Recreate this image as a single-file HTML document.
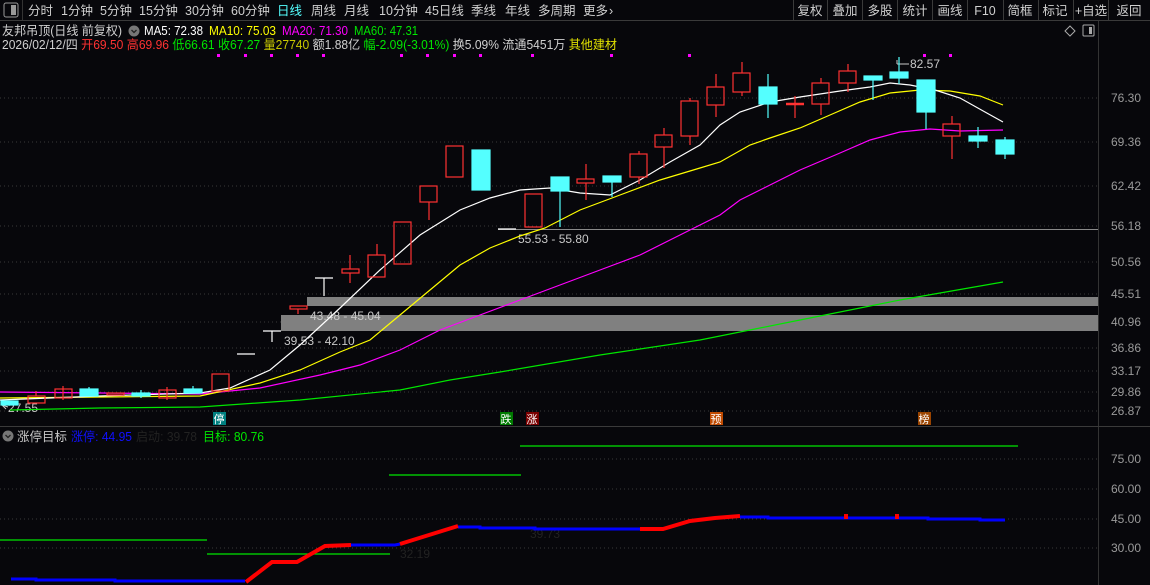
<!DOCTYPE html>
<html><head><meta charset="utf-8"><style>
html,body{margin:0;padding:0;background:#07070b;width:1150px;height:585px;overflow:hidden}
svg{display:block}
text{font-family:"Liberation Sans","Noto Sans CJK SC",sans-serif}
</style></head><body>
<svg width="1150" height="585" viewBox="0 0 1150 585" xmlns="http://www.w3.org/2000/svg">
<rect width="1150" height="585" fill="#07070b"/>
<line x1="0" y1="20.5" x2="1150" y2="20.5" stroke="#3a3a3a"/>
<rect x="4" y="3" width="14" height="14" fill="none" stroke="#999" rx="2"/>
<rect x="11" y="5" width="5" height="10" fill="#999"/>
<line x1="22.5" y1="0" x2="22.5" y2="20" stroke="#333"/>
<g font-size="12.5" fill="#d0d0d0">
<text x="28" y="15">分时</text><text x="61" y="15">1分钟</text><text x="100" y="15">5分钟</text><text x="139" y="15">15分钟</text><text x="185" y="15">30分钟</text><text x="231" y="15">60分钟</text><text x="277" y="15" fill="#54ffff">日线</text><text x="311" y="15">周线</text><text x="344" y="15">月线</text><text x="379" y="15">10分钟</text><text x="425" y="15">45日线</text><text x="471" y="15">季线</text><text x="505" y="15">年线</text><text x="538" y="15">多周期</text><text x="583" y="15">更多</text><text x="609" y="15">›</text>
</g>
<g stroke="#3a3a3a"><line x1="793.5" y1="0" x2="793.5" y2="20"/><line x1="827.5" y1="0" x2="827.5" y2="20"/><line x1="862.5" y1="0" x2="862.5" y2="20"/><line x1="897.5" y1="0" x2="897.5" y2="20"/><line x1="932.5" y1="0" x2="932.5" y2="20"/><line x1="967.5" y1="0" x2="967.5" y2="20"/><line x1="1003.5" y1="0" x2="1003.5" y2="20"/><line x1="1038.5" y1="0" x2="1038.5" y2="20"/><line x1="1073.5" y1="0" x2="1073.5" y2="20"/><line x1="1108.5" y1="0" x2="1108.5" y2="20"/></g>
<g font-size="12.5" fill="#d0d0d0" text-anchor="middle">
<text x="810" y="15">复权</text><text x="845" y="15">叠加</text><text x="880" y="15">多股</text><text x="915" y="15">统计</text><text x="950" y="15">画线</text><text x="985" y="15">F10</text><text x="1020" y="15">简框</text><text x="1055" y="15">标记</text><text x="1091" y="15">+自选</text><text x="1129" y="15">返回</text>
</g>
<line x1="1098.5" y1="21" x2="1098.5" y2="585" stroke="#333"/>
<path d="M1070 26 L1075 31 L1070 36 L1065 31Z" fill="none" stroke="#aaa"/>
<rect x="1083" y="25" width="11" height="11" fill="none" stroke="#aaa" rx="1"/><rect x="1089" y="27" width="3" height="7" fill="#aaa"/>
<text x="2" y="35" font-size="12.5" fill="#d0d0d0" textLength="120" lengthAdjust="spacingAndGlyphs">友邦吊顶(日线 前复权)</text>
<circle cx="134" cy="31" r="5.5" fill="#777"/><path d="M131.5 30 L134 32.5 L136.5 30" stroke="#222" fill="none" stroke-width="1.3"/>
<text x="144" y="35" font-size="12.5" fill="#ffffff" textLength="59" lengthAdjust="spacingAndGlyphs">MA5: 72.38</text>
<text x="209" y="35" font-size="12.5" fill="#ffff00" textLength="67" lengthAdjust="spacingAndGlyphs">MA10: 75.03</text>
<text x="282" y="35" font-size="12.5" fill="#ff00ff" textLength="66" lengthAdjust="spacingAndGlyphs">MA20: 71.30</text>
<text x="354" y="35" font-size="12.5" fill="#00e600" textLength="64" lengthAdjust="spacingAndGlyphs">MA60: 47.31</text>
<text x="2" y="49" font-size="12.5" fill="#d0d0d0" textLength="615" lengthAdjust="spacingAndGlyphs">2026/02/12/四 <tspan fill="#ff3232">开69.50</tspan> <tspan fill="#ff3232">高69.96</tspan> <tspan fill="#00e600">低66.61</tspan> <tspan fill="#00e600">收67.27</tspan> <tspan fill="#c8c800">量27740</tspan> 额1.88亿 <tspan fill="#00e600">幅-2.09(-3.01%)</tspan> 换5.09% 流通5451万 <tspan fill="#e0e000">其他建材</tspan></text>
<g fill="#ff00ff">
<rect x="217" y="54" width="3" height="3"/><rect x="244" y="54" width="3" height="3"/><rect x="270" y="54" width="3" height="3"/><rect x="296" y="54" width="3" height="3"/><rect x="322" y="54" width="3" height="3"/><rect x="400" y="54" width="3" height="3"/><rect x="426" y="54" width="3" height="3"/><rect x="453" y="54" width="3" height="3"/><rect x="479" y="54" width="3" height="3"/><rect x="531" y="54" width="3" height="3"/><rect x="610" y="54" width="3" height="3"/><rect x="688" y="54" width="3" height="3"/><rect x="923" y="54" width="3" height="3"/><rect x="949" y="54" width="3" height="3"/>
</g>
<g stroke="#3a3a3a" stroke-dasharray="1,3">
<line x1="0" y1="98" x2="1098" y2="98"/><line x1="0" y1="142" x2="1098" y2="142"/><line x1="0" y1="186" x2="1098" y2="186"/><line x1="0" y1="226" x2="1098" y2="226"/><line x1="0" y1="262" x2="1098" y2="262"/><line x1="0" y1="294" x2="1098" y2="294"/><line x1="0" y1="322" x2="1098" y2="322"/><line x1="0" y1="348" x2="1098" y2="348"/><line x1="0" y1="371" x2="1098" y2="371"/><line x1="0" y1="392" x2="1098" y2="392"/><line x1="0" y1="411" x2="1098" y2="411"/>
<line x1="0" y1="459" x2="1098" y2="459"/><line x1="0" y1="489" x2="1098" y2="489"/><line x1="0" y1="519" x2="1098" y2="519"/><line x1="0" y1="548" x2="1098" y2="548"/>
</g>
<g font-size="12" fill="#9a9a9a">
<text x="1111" y="102">76.30</text><text x="1111" y="146">69.36</text><text x="1111" y="190">62.42</text><text x="1111" y="230">56.18</text><text x="1111" y="266">50.56</text><text x="1111" y="298">45.51</text><text x="1111" y="326">40.96</text><text x="1111" y="352">36.86</text><text x="1111" y="375">33.17</text><text x="1111" y="396">29.86</text><text x="1111" y="415">26.87</text>
<text x="1111" y="463">75.00</text><text x="1111" y="493">60.00</text><text x="1111" y="523">45.00</text><text x="1111" y="552">30.00</text>
</g>
<rect x="307" y="297" width="791" height="9" fill="#808080"/>
<rect x="281" y="315" width="817" height="16" fill="#808080"/>
<line x1="498" y1="229.5" x2="1098" y2="229.5" stroke="#8a8a8a"/>
<g font-size="12" fill="#c8c8c8">
<text x="310" y="320">43.48 - 45.04</text><text x="284" y="345">39.53 - 42.10</text><text x="518" y="243">55.53 - 55.80</text><text x="910" y="68">82.57</text><text x="8" y="412">27.55</text>
</g>
<path d="M897 64 L909 64 M897 60 L897 64" stroke="#c8c8c8" fill="none"/>
<path d="M2 405 L6 409 M2 405 L8 407" stroke="#c8c8c8" fill="none"/>
<polyline fill="none" stroke="#00e600" stroke-width="1.2" points="10,410 100,408 200,407 300,400 400,390 450,380 500,372 600,355 700,340 800,320 900,300 1003,282"/>
<polyline fill="none" stroke="#ff00ff" stroke-width="1.2" points="0,392 200,394 260,388 320,375 360,365 400,350 440,330 480,315 520,300 560,285 600,270 640,255 680,235 720,215 740,200 770,185 800,170 840,153 870,140 900,132 930,129 960,131 1003,130"/>
<polyline fill="none" stroke="#ffff00" stroke-width="1.2" points="0,398 200,396 260,383 300,370 340,352 370,340 400,315 430,290 460,265 490,248 520,236 545,228 580,210 620,195 660,180 700,168 720,162 750,145 770,138 800,128 830,115 860,102 890,93 920,90 950,91 980,96 1003,105"/>
<polyline fill="none" stroke="#ffffff" stroke-width="1.2" points="0,400 100,396 200,393 230,388 270,370 300,345 340,308 380,270 420,235 460,210 490,198 520,190 550,188 580,193 610,195 640,180 670,162 700,145 720,125 740,112 770,102 800,97 840,91 870,87 890,83 910,85 935,90 960,98 985,112 1003,122"/>
<g stroke="#ff3232" fill="none" stroke-width="1.2">
<rect x="28" y="396" width="17" height="7"/><line x1="36" y1="391" x2="36" y2="396"/>
<rect x="55" y="389" width="17" height="9"/><line x1="63" y1="386" x2="63" y2="400"/>
<rect x="107" y="393" width="17" height="2"/>
<rect x="159" y="390" width="17" height="8"/><line x1="167" y1="387" x2="167" y2="400"/>
<rect x="212" y="374" width="17" height="17"/>
<rect x="290" y="306" width="17" height="3"/><line x1="298" y1="309" x2="298" y2="314"/>
<rect x="342" y="269" width="17" height="4"/><line x1="350" y1="255" x2="350" y2="269"/><line x1="350" y1="273" x2="350" y2="283"/>
<rect x="368" y="255" width="17" height="22"/><line x1="377" y1="244" x2="377" y2="255"/>
<rect x="394" y="222" width="17" height="42"/>
<rect x="420" y="186" width="17" height="16"/><line x1="429" y1="202" x2="429" y2="220"/>
<rect x="446" y="146" width="17" height="31"/>
<rect x="525" y="194" width="17" height="33"/>
<rect x="577" y="179" width="17" height="4"/><line x1="586" y1="164" x2="586" y2="179"/><line x1="586" y1="183" x2="586" y2="200"/>
<rect x="630" y="154" width="17" height="23"/><line x1="639" y1="151" x2="639" y2="154"/><line x1="639" y1="177" x2="639" y2="184"/>
<rect x="655" y="135" width="17" height="12"/><line x1="664" y1="128" x2="664" y2="135"/><line x1="664" y1="147" x2="664" y2="168"/>
<rect x="681" y="101" width="17" height="35"/><line x1="690" y1="98" x2="690" y2="101"/><line x1="690" y1="136" x2="690" y2="145"/>
<rect x="707" y="87" width="17" height="18"/><line x1="716" y1="74" x2="716" y2="87"/><line x1="716" y1="105" x2="716" y2="117"/>
<rect x="733" y="73" width="17" height="19"/><line x1="742" y1="62" x2="742" y2="73"/><line x1="742" y1="92" x2="742" y2="96"/>
<line x1="786" y1="104" x2="804" y2="104" stroke-width="2.5"/><line x1="795" y1="96" x2="795" y2="118"/>
<rect x="812" y="83" width="17" height="21"/><line x1="821" y1="78" x2="821" y2="83"/><line x1="821" y1="104" x2="821" y2="115"/>
<rect x="839" y="71" width="17" height="12"/><line x1="848" y1="64" x2="848" y2="71"/><line x1="848" y1="83" x2="848" y2="92"/>
<rect x="943" y="124" width="17" height="12"/><line x1="952" y1="116" x2="952" y2="124"/><line x1="952" y1="136" x2="952" y2="159"/>
</g>
<g fill="#54ffff" stroke="#54ffff" stroke-width="1.2">
<rect x="1" y="401" width="17" height="4"/>
<rect x="80" y="389" width="18" height="7"/><line x1="89" y1="387" x2="89" y2="389"/>
<rect x="132" y="393" width="18" height="3"/><line x1="141" y1="390" x2="141" y2="398"/>
<rect x="184" y="389" width="18" height="4"/><line x1="193" y1="386" x2="193" y2="389"/>
<rect x="472" y="150" width="18" height="40"/>
<rect x="551" y="177" width="18" height="14"/><line x1="560" y1="191" x2="560" y2="227"/>
<rect x="603" y="176" width="18" height="6"/><line x1="612" y1="182" x2="612" y2="197"/>
<rect x="759" y="87" width="18" height="17"/><line x1="768" y1="74" x2="768" y2="118"/>
<rect x="864" y="76" width="18" height="4"/><line x1="873" y1="80" x2="873" y2="100"/>
<rect x="890" y="72" width="18" height="6"/><line x1="899" y1="57" x2="899" y2="84"/>
<rect x="917" y="80" width="18" height="32"/><line x1="926" y1="112" x2="926" y2="129"/>
<rect x="969" y="136" width="18" height="5"/><line x1="978" y1="127" x2="978" y2="148"/>
<rect x="996" y="140" width="18" height="14"/><line x1="1005" y1="137" x2="1005" y2="159"/>
</g>
<g stroke="#ffffff" stroke-width="1.2">
<line x1="237" y1="354" x2="255" y2="354"/>
<line x1="263" y1="331" x2="281" y2="331"/><line x1="272" y1="331" x2="272" y2="342"/>
<line x1="315" y1="278" x2="333" y2="278"/><line x1="324" y1="278" x2="324" y2="296"/>
<line x1="498" y1="229" x2="516" y2="229"/>
</g>
<g font-size="11">
<rect x="213" y="412" width="13" height="13" fill="#008080"/><text x="213.5" y="423" fill="#fff">停</text>
<rect x="500" y="412" width="13" height="13" fill="#007a00"/><text x="500.5" y="423" fill="#fff">跌</text>
<rect x="526" y="412" width="13" height="13" fill="#7a0000"/><text x="526.5" y="423" fill="#fff">涨</text>
<rect x="710" y="412" width="13" height="13" fill="#c04a00"/><text x="710.5" y="423" fill="#fff">预</text>
<rect x="918" y="412" width="13" height="13" fill="#9a4400"/><text x="918.5" y="423" fill="#fff">榜</text>
</g>
<line x1="0" y1="426.5" x2="1150" y2="426.5" stroke="#3a3a3a"/>
<circle cx="8" cy="436" r="5.5" fill="#777"/><path d="M5.5 435 L8 437.5 L10.5 435" stroke="#222" fill="none" stroke-width="1.3"/>
<text x="17" y="441" font-size="12.5" fill="#c8c8c8" textLength="50" lengthAdjust="spacingAndGlyphs">涨停目标</text>
<text x="71" y="441" font-size="12.5" fill="#1010ff" textLength="61" lengthAdjust="spacingAndGlyphs">涨停: 44.95</text>
<text x="136" y="441" font-size="12.5" fill="#222" textLength="61" lengthAdjust="spacingAndGlyphs">启动: 39.78</text>
<text x="203" y="441" font-size="12.5" fill="#00e600" textLength="61" lengthAdjust="spacingAndGlyphs">目标: 80.76</text>
<g stroke="#00e600" stroke-width="1.3">
<line x1="0" y1="540" x2="207" y2="540"/><line x1="207" y1="554" x2="390" y2="554"/><line x1="389" y1="475" x2="521" y2="475"/><line x1="520" y1="446" x2="1018" y2="446"/>
</g>
<g font-size="12" fill="#222"><text x="400" y="558">32.19</text><text x="530" y="538">39.73</text></g>
<polyline fill="none" stroke="#0000ff" stroke-width="3" points="11,579 36,579 36,580 115,580 115,581 245,581"/>
<polyline fill="none" stroke="#0000ff" stroke-width="3" points="351,545 395,545 400,544"/>
<polyline fill="none" stroke="#0000ff" stroke-width="3" points="458,527 480,527 480,528 535,528 535,529 640,529"/>
<polyline fill="none" stroke="#0000ff" stroke-width="3" points="740,517 768,517 768,518 928,518 928,519 980,519 980,520 1005,520"/>
<polyline fill="none" stroke="#ff0000" stroke-width="4" points="246,582 272,562 297,562 325,546 351,545"/>
<polyline fill="none" stroke="#ff0000" stroke-width="4" points="400,544 458,526"/>
<polyline fill="none" stroke="#ff0000" stroke-width="4" points="640,529 663,529 690,521 715,518 740,516"/>
<rect x="844" y="514" width="4" height="5" fill="#ff0000"/><rect x="895" y="514" width="4" height="5" fill="#ff0000"/>
</svg>
</body></html>
